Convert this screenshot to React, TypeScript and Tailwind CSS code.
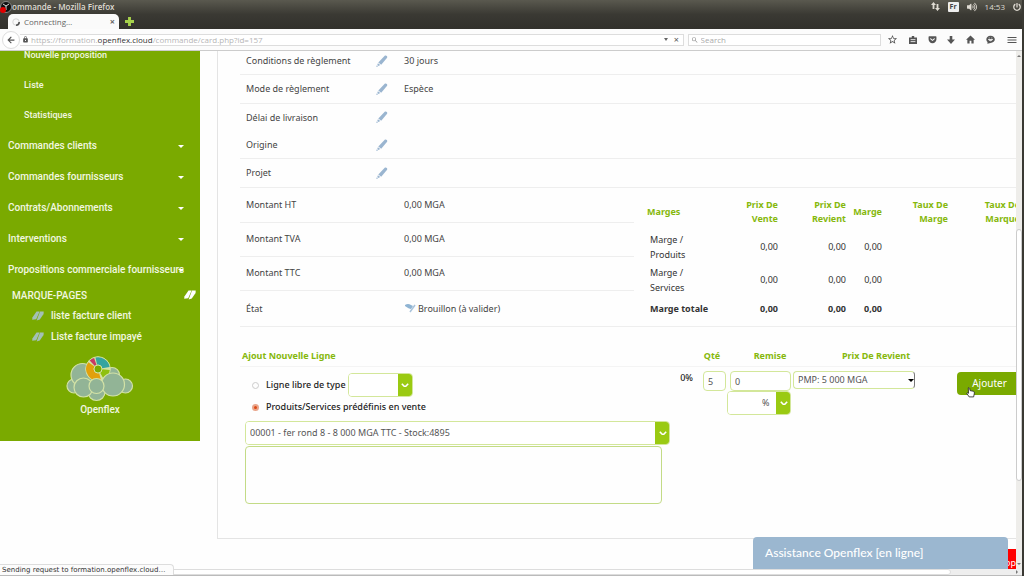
import type { ReactNode } from "react";
import { MdLock, MdMenu, MdSearch, MdStarBorder } from "react-icons/md";
import {
  FaArrowDown,
  FaArrowLeft,
  FaGetPocket,
  FaPowerOff,
  FaVolumeUp,
} from "react-icons/fa";
import { clsx } from "clsx";

const menuItems = [
  "Commandes clients",
  "Commandes fournisseurs",
  "Contrats/Abonnements",
  "Interventions",
  "Propositions commerciale fournisseurs",
];

const orderRows = [
  { label: "Conditions de règlement", value: "30 jours", line: true },
  { label: "Mode de règlement", value: "Espèce", line: true },
  { label: "Délai de livraison", value: "", line: false },
  { label: "Origine", value: "", line: true },
  { label: "Projet", value: "", line: true },
];

const amounts = [
  { label: "Montant HT", value: "0,00 MGA" },
  { label: "Montant TVA", value: "0,00 MGA" },
  { label: "Montant TTC", value: "0,00 MGA" },
];

const Pencil = () => (
  <svg viewBox="0 0 12 12" className="size-3 fill-[#9ab5d0]">
    <path d="M8.500.9c.7-.7 1.700-.5 2.300 0 .6.6.6 1.400.1 2.100L5.200 9.700 2.300 7.500z" />
    <path d="M1.900 8.200 4.300 10 2.400 10.900 1.300 10z" />
    <circle cx="1" cy="11.200" r=".7" />
  </svg>
);

const BookIcon = ({ className }: { className: string }) => (
  <svg viewBox="0 0 12 10" className={className}>
    <path d="M4.500.6 7.600.4 4.200 8.200.2 8.700.4 6.500z" fill="currentColor" />
    <path d="M8 .4 11.700.6 11.600 3 7.800 8.600 4.600 9.500z" fill="currentColor" />
  </svg>
);

const Chevron = () => (
  <svg viewBox="0 0 10 6" className="w-2 fill-none stroke-white stroke-[2]">
    <path d="M1 1l4 4 4-4" />
  </svg>
);

const Logo = () => (
  <svg viewBox="0 0 68 46" className="h-[46px] w-[68px]">
    <g fill="#92b496" stroke="#d3e2a6" strokeWidth="1.200">
      <circle cx="46" cy="19" r="7.500" />
      <circle cx="8" cy="30" r="7" />
      <circle cx="59.500" cy="30" r="7" />
      <circle cx="16.500" cy="19" r="11.500" />
      <circle cx="30.500" cy="36" r="8.500" />
    </g>
    <circle cx="32" cy="13" r="12.300" fill="#d3e2a6" stroke="#d3e2a6" />
    <g fill="none" strokeWidth="7.500">
      <path d="M34.100 20.700A8 8 0 0 1 25.400 8.400" stroke="#e2a00c" />
      <path d="M26.300 7.300A8 8 0 0 1 29.300 5.500" stroke="#c93765" />
      <path d="M30.300 5.200A8 8 0 0 1 39.900 11.600" stroke="#35a4a0" />
      <path d="M40 13.700A8 8 0 0 1 36 19.900" stroke="#8fc010" />
    </g>
    <circle cx="32" cy="13" r="4" fill="#7aaa00" stroke="#d3e2a6" />
    <g fill="#92b496" stroke="#d3e2a6" strokeWidth="1.200">
      <circle cx="17.500" cy="31.500" r="9.500" />
      <circle cx="47" cy="28.500" r="11.500" />
      <circle cx="30.500" cy="30" r="7.500" />
    </g>
  </svg>
);

type SelectBoxProps = {
  label: string;
  value: string;
  className: string;
};

const SelectBox = ({ label, value, className }: SelectBoxProps) => (
  <div
    className={clsx(
      "relative h-6 shrink-0 overflow-hidden rounded border border-[#d3e79a]",
      className
    )}
  >
    <select
      aria-label={label}
      className="h-full w-full appearance-none bg-white pl-1 text-[9px] text-[#555]"
    >
      <option>{value}</option>
    </select>
    <span className="pointer-events-none absolute -inset-y-px -right-px left-auto flex w-[15px] items-center justify-center bg-[#9aca12]">
      <Chevron />
    </span>
  </div>
);

const BrowserChrome = () => (
  <header className="shrink-0 font-['Open_Sans',sans-serif]">
    <div className="bg-linear-to-b from-[#5a594f] via-[#3a3933] via-50% to-[#32312c]">
      <div className="flex h-[13px] items-center text-[#dfdbd2]">
        <svg viewBox="0 0 12 12" className="size-3 shrink-0">
          <circle cx="6" cy="6" r="5.500" fill="#111" stroke="#aaa" strokeWidth=".7" />
          <path d="M3 3l3 2 3-2M6 5v4" stroke="#ddd" fill="none" />
          <circle cx="3" cy="9" r="3" fill="#e00000" />
        </svg>
        <span className="text-[8px] font-semibold">ommande - Mozilla Firefox</span>
        <div className="ml-auto flex items-center gap-2 pr-[1px] text-[8px]">
          <svg viewBox="0 0 9 9" className="size-[9px] fill-[#dfdbd2]">
            <path d="M2.500 0 5 3H3.400v4H1.600V3H0zM6.500 9 4 6h1.600V2h1.800v4H9z" />
          </svg>
          <span className="rounded-[1px] bg-[#eee] px-[2px] text-[7px] leading-[10px] font-bold text-[#444]">
            Fr
          </span>
          <FaVolumeUp className="size-[10px]" />
          <span>14:53</span>
          <FaPowerOff className="size-2" />
        </div>
      </div>
      <div className="flex h-4 items-end pl-2">
        <div className="flex h-[15px] w-[111px] items-center rounded-t-[5px] bg-[#fafafa] pr-1 pl-1 text-[8px] text-[#666]">
          <svg viewBox="0 0 10 10" className="mr-1 size-2">
            <circle cx="5" cy="5" r="4" fill="none" stroke="#ccc" />
            <path d="M9 5a4 4 0 0 1-4 4" fill="none" stroke="#555" strokeWidth="2" />
          </svg>
          Connecting…
          <button aria-label="Fermer l'onglet" className="ml-auto text-[9px] font-bold">
            ×
          </button>
        </div>
        <button aria-label="Nouvel onglet" className="ml-[6px] self-center">
          <svg viewBox="0 0 8 8" className="size-[9px]">
            <path d="M2.700 0h2.600v2.700H8v2.600H5.300V8H2.700V5.300H0V2.700h2.700z" fill="#a6d14b" />
          </svg>
        </button>
      </div>
    </div>
    <div className="flex h-[22px] items-center border-b border-[#ccc] bg-[#fcfcfc] text-[#555]">
      <button
        aria-label="Retour"
        className="ml-[2px] flex size-[18px] items-center justify-center rounded-full border border-[#ddd] bg-white"
      >
        <FaArrowLeft className="size-2" />
      </button>
      <div className="flex h-3 flex-1 items-center border-y border-r border-[#ddd] bg-white pr-1 pl-[2px]">
        <MdLock className="mr-[2px] size-[7px] shrink-0" />
        <span className="text-[8px] text-[#b5b5b5]">
          https://formation.<span className="text-[#333]">openflex.cloud</span>
          /commande/card.php?id=157
        </span>
        <span className="ml-auto border-x-[2px] border-t-[3px] border-x-transparent border-t-[#666]" />
        <button aria-label="Arrêter" className="ml-[6px] text-[9px] leading-none">
          ×
        </button>
      </div>
      <div className="ml-1 flex h-3 w-[193px] items-center border border-[#ddd] bg-white pl-[2px]">
        <MdSearch className="size-2 text-[#888]" />
        <input
          aria-label="Search"
          placeholder="Search"
          className="ml-[2px] w-full text-[8px] placeholder:text-[#aaa]"
        />
      </div>
      <div className="flex w-[141px] items-center justify-between pr-1 pl-[6px]">
        <MdStarBorder className="size-[11px] stroke-current" />
        <svg viewBox="0 0 10 10" className="size-2">
          <path d="M3.500 0h3v2H10v8H0V2h3.500z" fill="#555" />
          <path d="M2 4.500h6M2 7h6" stroke="#fff" />
        </svg>
        <FaGetPocket className="size-[9px]" />
        <svg viewBox="0 0 8 8" className="size-2 fill-[#555]">
          <path d="M2.700 0h2.600v3.500H8L4 8 0 3.500h2.700z" />
        </svg>
        <svg viewBox="0 0 10 10" className="size-[9px] fill-[#555]">
          <path d="M5 .5 10 5.300H8.500V9.500H6V6.500H4V9.500H1.500V5.300H0z" />
        </svg>
        <svg viewBox="0 0 10 10" className="size-[9px]">
          <path d="M5 .8c2.800 0 4.800 1.800 4.800 4S7.800 8.800 5 8.800L1.500 9.800 1.700 7.800C-1 5.400.5.8 5 .8z" fill="#555" />
          <path d="M2.500 5q2.500 3 5 0zM3 3.300h1.200M5.800 3.300H7" fill="#fff" stroke="#fff" strokeWidth=".7" />
        </svg>
        <MdMenu className="size-3 stroke-current" />
      </div>
    </div>
  </header>
);

const Sidebar = () => (
  <nav className="h-[390px] w-[200px] shrink-0 overflow-hidden bg-[#7aaa00] font-[Roboto,sans-serif] text-[#f2f7e0]">
    <ul className="-mt-[11px] pl-6 text-[9px] leading-[30px] font-medium">
      <li><a href="#nouvelle">Nouvelle proposition</a></li>
      <li><a href="#liste">Liste</a></li>
      <li><a href="#stats">Statistiques</a></li>
    </ul>
    <ul className="text-[10px] leading-[31px] font-medium">
      {menuItems.map((item) => (
        <li key={item} className="relative pl-2">
          <a href="#menu" className="block whitespace-nowrap">{item}</a>
          <span className="absolute top-[15px] right-4 border-x-[3px] border-t-[3px] border-x-transparent border-t-white" />
        </li>
      ))}
    </ul>
    <div className="mt-[2px] flex h-4 items-center justify-between pr-1 pl-3 text-[10px] font-medium">
      <span>MARQUE-PAGES</span>
      <BookIcon className="w-3 text-white" />
    </div>
    <ul className="mt-[2px] pl-8 text-[10px] leading-[21px] font-medium">
      {["liste facture client", "Liste facture impayé"].map((item) => (
        <li key={item} className="flex items-center gap-[7px]">
          <BookIcon className="w-3 text-[#a3c0b6]" />
          <a href="#favori">{item}</a>
        </li>
      ))}
    </ul>
    <div className="mt-[9px] flex flex-col items-center text-[10px] font-medium">
      <Logo />
      Openflex
    </div>
  </nav>
);

const OrderInfo = () => (
  <table className="-mt-1 h-[141px] w-full">
    <tbody>
      {orderRows.map((row) => (
        <tr key={row.label} className={clsx(row.line && "border-b border-[#eee]")}>
          <th className="w-[136px] pl-[6px] text-left font-normal">{row.label}</th>
          <td className="w-6">
            <button aria-label={`Modifier ${row.label}`} className="block">
              <Pencil />
            </button>
          </td>
          <td className="pl-1">{row.value}</td>
        </tr>
      ))}
    </tbody>
  </table>
);

const AmountRow = ({ label, children }: { label: string; children: ReactNode }) => (
  <tr className="h-[34px] border-b border-[#eee] last:h-[36px] last:border-b-0">
    <th className="w-[164px] pl-[6px] text-left font-normal">{label}</th>
    <td>{children}</td>
  </tr>
);

const Amounts = () => (
  <table className="flex-1 self-start">
    <tbody>
      {amounts.map((row) => (
        <AmountRow key={row.label} label={row.label}>{row.value}</AmountRow>
      ))}
      <AmountRow label="État">
        <span className="flex items-center gap-[2px]">
          <svg viewBox="0 0 12 10" className="w-3">
            <path d="M1 2q3-2 6 0l2 1-2 3q-2 0-6-3z" fill="#8fb4d3" />
            <path d="M11 2 6 9" stroke="#a9c3db" strokeWidth="1.500" />
          </svg>
          Brouillon (à valider)
        </span>
      </AmountRow>
    </tbody>
  </table>
);

const margins = [
  { label: "Marge / Produits", bold: false },
  { label: "Marge / Services", bold: false },
  { label: "Marge totale", bold: true },
];

const Margins = () => (
  <div className="w-[382px] shrink-0 overflow-hidden pt-[9px]">
    <table className="w-[386px] table-fixed text-right">
      <thead className="text-[9px] leading-[14px] text-[#86b80c]">
        <tr className="h-[33px] align-middle *:pb-[3px]">
          <th className="w-[76px] pl-[13px] text-left">Marges</th>
          <th className="w-[68px] pl-7">Prix De Vente</th>
          <th className="w-[68px] pl-5">Prix De Revient</th>
          <th className="w-[36px]">Marge</th>
          <th className="w-[66px] pl-4">Taux De Marge</th>
          <th className="pl-7">Taux De Marque</th>
        </tr>
      </thead>
      <tbody>
        {margins.map((row) => (
          <tr
            key={row.label}
            className={clsx("leading-[15px] text-[#333]", row.bold ? "h-6 font-bold" : "h-[33px]")}
          >
            <td className={clsx("pl-4 text-left", row.bold ? "whitespace-nowrap" : "pr-4")}>
              {row.label}
            </td>
            <td>0,00</td>
            <td>0,00</td>
            <td>0,00</td>
            <td />
            <td />
          </tr>
        ))}
      </tbody>
    </table>
  </div>
);

const inputStyle = "rounded border border-[#d3e79a] bg-white pl-1 text-[9px] text-[#555]";

const NewLineForm = () => (
  <form className="relative mt-[18px]">
    <div className="flex h-[22px] items-center border-b border-[#f4f4f4] pl-[2px] text-[9px] font-bold text-[#86b80c]">
      <h2 className="flex-1">Ajout Nouvelle Ligne</h2>
      <span className="w-[26px] text-center">Qté</span>
      <span className="ml-1 w-[82px] text-center">Remise</span>
      <span className="w-[130px] text-center">Prix De Revient</span>
      <span className="w-[75px]" />
    </div>
    <div className="flex items-start pl-[5px]">
      <div className="min-w-0 flex-1 pt-[6px]">
        <div className="flex items-center text-[9px] font-medium text-[#222]">
          <label className="flex items-center gap-[7px] pl-[7px]">
            <input
              type="radio"
              name="kind"
              className="size-[7px] appearance-none rounded-full border border-[#ccc]"
            />
            Ligne libre de type
          </label>
          <SelectBox label="Type de ligne" value="" className="ml-[2px] w-[65px]" />
        </div>
        <label className="flex h-5 items-center gap-[7px] pl-[7px] text-[9px] font-medium text-[#222]">
          <input
            type="radio"
            name="kind"
            defaultChecked
            className="size-[7px] appearance-none rounded-full border-2 border-[#e9a68c] bg-[#dd4814]"
          />
          Produits/Services prédéfinis en vente
        </label>
        <SelectBox
          label="Produit"
          value="00001 - fer rond 8 - 8 000 MGA TTC - Stock:4895"
          className="mt-1 w-[425px]"
        />
        <textarea
          aria-label="Description"
          className="mt-px block h-[58px] w-[417px] resize-none rounded border border-[#c3db86]"
        />
      </div>
      <span className="mr-[10px] pt-1 font-medium text-[#222]">0%</span>
      <input aria-label="Qté" defaultValue="5" className={clsx(inputStyle, "mt-1 h-5 w-[23px]")} />
      <div className="mt-1 flex w-[67px] flex-col items-end pr-[2px]">
        <input aria-label="Remise" defaultValue="0" className={clsx(inputStyle, "h-5 w-[61px]")} />
        <SelectBox label="Type de remise" value="%" className="w-[64px] [&_select]:pl-[34px]" />
      </div>
      <div className="relative mt-1 w-[122px]">
        <select
          aria-label="Prix de revient"
          className={clsx(inputStyle, "h-[18px] w-full appearance-none border-r-[#777]")}
        >
          <option>PMP: 5 000 MGA</option>
        </select>
        <span className="pointer-events-none absolute top-2 right-[1px] border-x-[3px] border-t-[3px] border-x-transparent border-t-black" />
      </div>
      <button
        type="submit"
        className="mt-[5px] ml-[42px] h-[23px] w-[59px] rounded-l bg-[#7aaa00] pl-[6px] text-[10px] text-white"
      >
        Ajouter
      </button>
    </div>
    <svg viewBox="0 0 10 12" className="absolute top-[42px] right-[41px] w-[9px]">
      <path
        d="M2.500 1q1-.8 1.500.3L4.500 4l4 .8q1 .5.8 2L8.500 11H3.500L.8 7q.2-1 2 0z"
        fill="#fff"
        stroke="#222"
        strokeWidth=".9"
      />
    </svg>
  </form>
);

const App = () => {
  return (
    <div className="flex h-screen flex-col overflow-hidden border-r-2 border-[#3a3933] bg-[#fefefe] font-['Noto_Sans',sans-serif] text-[#444]">
      <BrowserChrome />
      <div className="relative flex min-h-0 flex-1">
        <div className="flex min-w-0 flex-1 items-start overflow-hidden">
          <Sidebar />
          <main className="ml-[17px] h-[488px] min-w-0 flex-1 overflow-hidden border-b border-l border-[#e4e4e4] pl-[22px] text-[9px]">
            <OrderInfo />
            <div className="flex border-b border-[#eee]">
              <Amounts />
              <Margins />
            </div>
            <NewLineForm />
          </main>
        </div>
        {/* vertical scrollbar */}
        <div className="flex w-[6px] flex-col items-center bg-[#eeedea]">
          <span className="mt-1 border-x-[2px] border-b-[2px] border-x-transparent border-b-[#777]" />
          <div className="mt-[172px] h-[252px] w-full rounded border border-[#ccc] bg-white" />
          <span className="mt-auto mb-1 border-x-[2px] border-t-[2px] border-x-transparent border-t-[#777]" />
        </div>
        <div className="absolute right-[6px] bottom-0 flex h-5 w-2 items-end justify-end overflow-hidden bg-[#f00] text-[9px] text-white">
          op
        </div>
        <div className="absolute right-[14px] bottom-0 h-8 w-[255px] rounded-t bg-[#9bb7d0] pl-3 font-[Lato,sans-serif] text-[12px] leading-8 font-medium text-white">
          Assistance Openflex [en ligne]
        </div>
      </div>
      <footer className="relative flex h-[7px] shrink-0 items-center border-b border-[#bbb] bg-[#eee]">
        <div className="h-[6px] w-[951px] rounded border border-[#ddd] bg-white" />
        <span className="mr-1 ml-auto border-y-[2px] border-l-[2px] border-y-transparent border-l-[#777]" />
        <div className="absolute bottom-0 left-0 h-[11px] w-[174px] rounded-tr border-t border-r border-[#ddd] bg-[#fcfcfc] pl-[2px] font-['DejaVu_Sans',sans-serif] text-[7px] leading-[10px] whitespace-nowrap text-[#333]">
          Sending request to formation.openflex.cloud…
        </div>
      </footer>
    </div>
  );
};

export default App;
